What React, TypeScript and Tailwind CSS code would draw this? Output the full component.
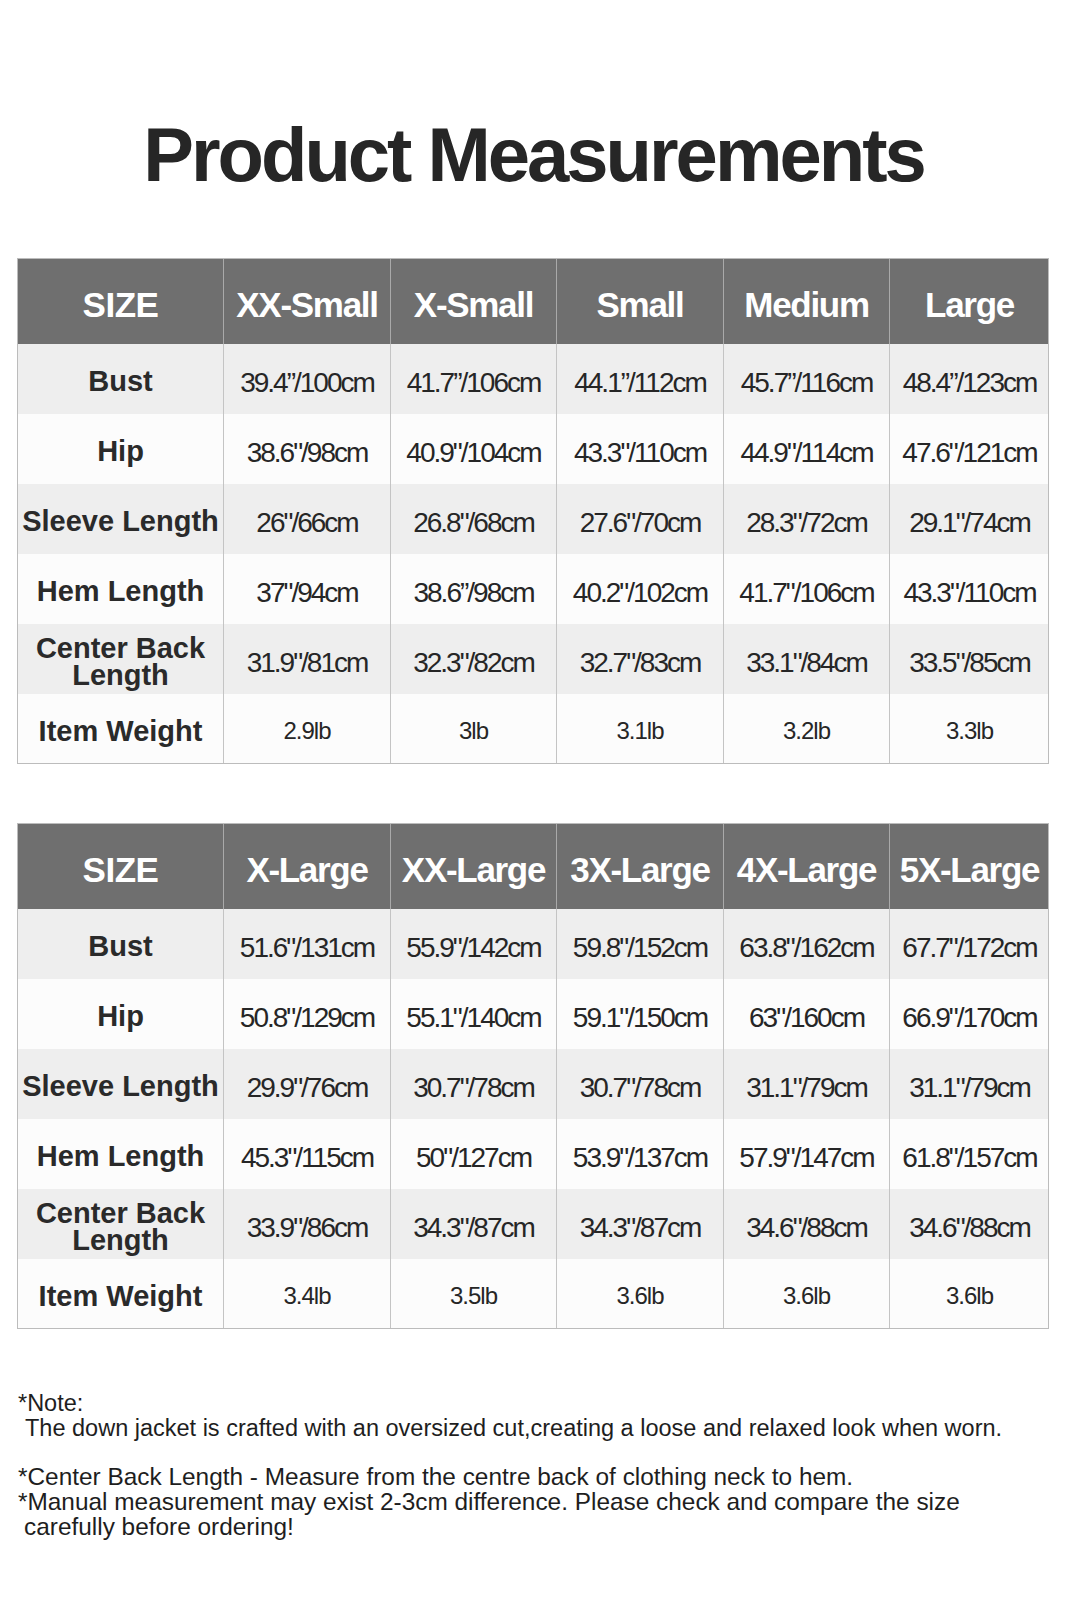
type Row = { label: string[]; values: string[]; small?: boolean };

type Table = { sizes: string[]; rows: Row[] };

const tables: Table[] = [
  {
    sizes: ["XX-Small", "X-Small", "Small", "Medium", "Large"],
    rows: [
      { label: ["Bust"], values: ["39.4”/100cm", "41.7”/106cm", "44.1”/112cm", "45.7”/116cm", "48.4”/123cm"] },
      { label: ["Hip"], values: ['38.6"/98cm', '40.9"/104cm', '43.3"/110cm', '44.9"/114cm', '47.6"/121cm'] },
      { label: ["Sleeve Length"], values: ['26"/66cm', '26.8"/68cm', '27.6"/70cm', '28.3"/72cm', '29.1"/74cm'] },
      { label: ["Hem Length"], values: ['37"/94cm', "38.6”/98cm", '40.2"/102cm', '41.7"/106cm', '43.3"/110cm'] },
      { label: ["Center Back", "Length"], values: ['31.9"/81cm', '32.3"/82cm', '32.7"/83cm', '33.1"/84cm', '33.5"/85cm'] },
      { label: ["Item Weight"], values: ["2.9lb", "3lb", "3.1lb", "3.2lb", "3.3lb"], small: true },
    ],
  },
  {
    sizes: ["X-Large", "XX-Large", "3X-Large", "4X-Large", "5X-Large"],
    rows: [
      { label: ["Bust"], values: ['51.6"/131cm', '55.9"/142cm', '59.8"/152cm', '63.8"/162cm', '67.7"/172cm'] },
      { label: ["Hip"], values: ['50.8"/129cm', '55.1"/140cm', '59.1"/150cm', '63"/160cm', '66.9"/170cm'] },
      { label: ["Sleeve Length"], values: ['29.9"/76cm', '30.7"/78cm', '30.7"/78cm', '31.1"/79cm', '31.1"/79cm'] },
      { label: ["Hem Length"], values: ['45.3"/115cm', '50"/127cm', '53.9"/137cm', '57.9"/147cm', '61.8"/157cm'] },
      { label: ["Center Back", "Length"], values: ['33.9"/86cm', '34.3"/87cm', '34.3"/87cm', '34.6"/88cm', '34.6"/88cm'] },
      { label: ["Item Weight"], values: ["3.4lb", "3.5lb", "3.6lb", "3.6lb", "3.6lb"], small: true },
    ],
  },
];

const cols = "grid grid-cols-[205px_167px_166px_167px_166px_160px]";

function SizeTable({ t }: { t: Table }) {
  return (
    <div className="w-[1032px] border border-[#bcbcbc]">
      {/* header */}
      <div className={`${cols} h-[85px] bg-[#6f6f6f]`}>
        <div className="flex items-center justify-center pt-2 text-[35px] font-bold tracking-[-0.5px] text-white">
          SIZE
        </div>
        {t.sizes.map((s) => (
          <div
            key={s}
            className="flex items-center justify-center border-l border-[#a9a9a9] pt-2 text-[35px] font-bold tracking-[-1.3px] text-white whitespace-nowrap"
          >
            {s}
          </div>
        ))}
      </div>

      {t.rows.map((r, i) => (
        <div
          key={r.label.join(" ")}
          className={`${cols} ${i === t.rows.length - 1 ? "h-[69px]" : "h-[70px]"} ${
            i % 2 === 0 ? "bg-[#eeeeee]" : "bg-[#fcfcfc]"
          }`}
        >
          <div className="flex flex-col items-center justify-center pt-[5px] text-[29px] leading-[27px] font-bold text-[#2a2a2a] whitespace-nowrap">
            {r.label.map((l) => (
              <span key={l}>{l}</span>
            ))}
          </div>
          {r.values.map((v, j) => (
            <div
              key={j}
              className={`flex items-center justify-center border-l border-[#c4c4c4] text-[#262626] whitespace-nowrap ${
                r.small ? "pt-1 text-[24px] tracking-[-1px]" : "pt-2 text-[28px] tracking-[-2px]"
              }`}
            >
              {v}
            </div>
          ))}
        </div>
      ))}
    </div>
  );
}

export default function App() {
  return (
    <div
      className="w-[1067px] h-[1600px] bg-white text-[#222]"
      style={{ fontFamily: '"Liberation Sans", Arial, sans-serif' }}
    >
      {/* Title */}
      <div className="h-[258px] pt-[117px]">
        <h1 className="text-center text-[76px] leading-none font-bold tracking-[-3px] text-[#262626]">
          Product Measurements
        </h1>
      </div>

      <div className="flex flex-col gap-[59px] pl-[17px]">
        {tables.map((t, i) => (
          <SizeTable key={i} t={t} />
        ))}
      </div>

      {/* Notes */}
      <div className="mt-[62px] pl-[18px] text-[23.5px] leading-[25px] text-[#1e1e1e]">
        <p>*Note:</p>
        <p className="pl-[7px]">
          The down jacket is crafted with an oversized cut,creating a loose and relaxed look when worn.
        </p>
        <div className="mt-[23px] text-[24.4px]">
          <p>*Center Back Length - Measure from the centre back of clothing neck to hem.</p>
          <p>*Manual measurement may exist 2-3cm difference. Please check and compare the size</p>
          <p className="pl-[6px]">carefully before ordering!</p>
        </div>
      </div>
    </div>
  );
}
